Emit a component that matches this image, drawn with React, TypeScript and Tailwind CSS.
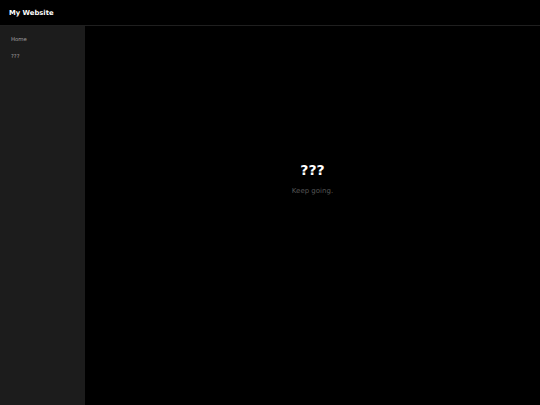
export default function App() {
  return (
    <div className="flex h-[405px] w-[540px] flex-col bg-black font-['DejaVu_Sans',sans-serif] text-white">
      <header className="flex h-[26px] shrink-0 items-center border-b border-[#1f1f1f] px-[9px] pt-[1px]">
        <h1 className="text-[6.8px] font-bold">My Website</h1>
      </header>
      <div className="flex flex-1">
        <aside className="flex w-[85px] shrink-0 flex-col gap-[9px] bg-[#1c1c1c] px-[11px] pt-[9px]">
          <a className="text-[5.4px] leading-[8px] text-[#a0a0a0]">Home</a>
          <a className="text-[5.4px] leading-[8px] text-[#a0a0a0]">???</a>
        </aside>
        <main className="flex flex-1 flex-col items-center pt-[136px]">
          <h2 className="text-[14px] font-bold leading-[16px]">???</h2>
          <p className="mt-[8px] text-[7px] text-[#555555]">Keep going.</p>
        </main>
      </div>
    </div>
  );
}
